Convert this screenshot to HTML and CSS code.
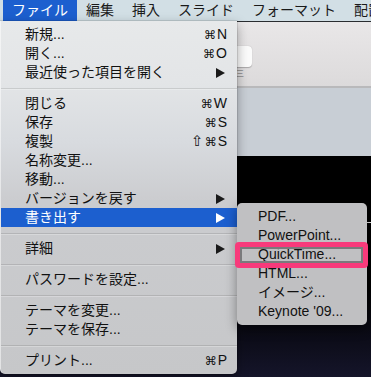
FILE: index.html
```html
<!DOCTYPE html>
<html lang="ja">
<head>
<meta charset="utf-8">
<title>Keynote ファイルメニュー</title>
<link rel="stylesheet" href="styles.css">
</head>
<body>
<div class="screen">
  <div class="menubar">
    <span class="mb-item active">ファイル</span>
    <span class="mb-item">編集</span>
    <span class="mb-item">挿入</span>
    <span class="mb-item">スライド</span>
    <span class="mb-item">フォーマット</span>
    <span class="mb-item">配置</span>
  </div>
  <div class="window">
    <div class="toolbar">
      <div class="tb-btn"></div>
      <span class="tb-label">三</span>
    </div>
    <div class="canvas-top"></div>
    <div class="slide"><span class="slide-line"></span></div>
  </div>

  <div class="menu">
    <div class="item"><span class="label">新規...</span><span class="key"><span class="cmd">⌘</span>N</span></div>
    <div class="item"><span class="label">開く...</span><span class="key"><span class="cmd">⌘</span>O</span></div>
    <div class="item"><span class="label">最近使った項目を開く</span><svg class="arrow" viewBox="0 0 9 10"><polygon points="0,0 9,5 0,10"/></svg></div>
    <div class="sep"></div>
    <div class="item"><span class="label">閉じる</span><span class="key"><span class="cmd">⌘</span>W</span></div>
    <div class="item"><span class="label">保存</span><span class="key"><span class="cmd">⌘</span>S</span></div>
    <div class="item"><span class="label">複製</span><span class="key"><span class="shift">⇧</span><span class="cmd">⌘</span>S</span></div>
    <div class="item"><span class="label">名称変更...</span></div>
    <div class="item"><span class="label">移動...</span></div>
    <div class="item"><span class="label">バージョンを戻す</span><svg class="arrow" viewBox="0 0 9 10"><polygon points="0,0 9,5 0,10"/></svg></div>
    <div class="item selected"><span class="label">書き出す</span><svg class="arrow" viewBox="0 0 9 10"><polygon points="0,0 9,5 0,10"/></svg></div>
    <div class="sep"></div>
    <div class="item"><span class="label">詳細</span><svg class="arrow" viewBox="0 0 9 10"><polygon points="0,0 9,5 0,10"/></svg></div>
    <div class="sep"></div>
    <div class="item"><span class="label">パスワードを設定...</span></div>
    <div class="sep"></div>
    <div class="item"><span class="label">テーマを変更...</span></div>
    <div class="item"><span class="label">テーマを保存...</span></div>
    <div class="sep"></div>
    <div class="item"><span class="label">プリント...</span><span class="key"><span class="cmd">⌘</span>P</span></div>
  </div>

  <div class="submenu">
    <div class="sub-item">PDF...</div>
    <div class="sub-item">PowerPoint...</div>
    <div class="sub-item">QuickTime...</div>
    <div class="sub-item">HTML...</div>
    <div class="sub-item">イメージ...</div>
    <div class="sub-item">Keynote '09...</div>
  </div>
  <div class="callout"></div>
</div>
</body>
</html>
```

FILE: styles.css
```css
* { box-sizing: border-box; }

html, body {
  margin: 0;
  padding: 0;
  background: #000;
}

.screen {
  position: relative;
  width: 371px;
  height: 377px;
  overflow: hidden;
  font-family: "Liberation Sans", "Noto Sans CJK JP", sans-serif;
  font-size: 14px;
  color: #111;
}

/* ---------- menu bar ---------- */
.menubar {
  display: flex;
  height: 22px;
  padding-left: 3px;
  background: #d2dfe5;
  border-bottom: 1px solid #2a2d30;
  white-space: nowrap;
}

.mb-item {
  display: block;
  flex: none;
  height: 21px;
  line-height: 21px;
  padding: 0 9px;
  color: #1a1a1a;
}

.mb-item.active {
  background: #1c5fcf;
  color: #fff;
}

/* ---------- app window behind ---------- */
.window {
  display: flex;
  flex-direction: column;
  height: 355px;
}

.toolbar {
  position: relative;
  height: 66px;
  flex: none;
  background: linear-gradient(#e9e7e8, #dcdadb);
  border-bottom: 2px solid #b9b9bb;
  padding: 24px 0 0 198px;
}

.tb-btn {
  width: 54px;
  height: 21px;
  background: #fbfbfb;
  border-radius: 4px;
  box-shadow: 0 0.5px 1px rgba(0,0,0,0.25);
}

.tb-label {
  display: block;
  margin: 3px 0 0 38px;
  font-size: 8px;
  line-height: 8px;
  color: #666;
}

.canvas-top {
  height: 68px;
  flex: none;
  background: #c8ced5;
}

.slide {
  position: relative;
  flex: 1;
  background: linear-gradient(#000 0, #000 130px, #15152a 100%);
}

.slide-line {
  position: absolute;
  left: 360px;
  top: 66px;
  width: 11px;
  height: 1px;
  background: #e8e8e8;
}

/* ---------- File menu ---------- */
.menu {
  position: absolute;
  left: 0;
  top: 21px;
  width: 237px;
  padding: 4px 0 4px;
  border-radius: 0 0 5px 5px;
  border-left: 1px solid rgba(255,255,255,0.5);
  background: linear-gradient(#e7e9ea 0, #e3e5e7 60px, #d8dbdf 120px, #cbcccf 180px, #c6c7c9 100%);
  box-shadow: 0 4px 12px rgba(0,0,0,0.35), 0 0 0 0.5px rgba(0,0,0,0.2);
}

.item {
  display: flex;
  align-items: center;
  height: 19px;
  line-height: 19px;
  padding: 0 10px 0 24px;
  white-space: nowrap;
}

.item .label {
  flex: 1;
}

.item .key {
  font-family: "Liberation Sans", "DejaVu Sans", sans-serif;
  font-size: 14px;
}

.key .cmd {
  font-family: "DejaVu Sans", sans-serif;
  font-size: 12px;
  margin-right: 1px;
}

.key .shift {
  font-family: "DejaVu Sans", sans-serif;
  font-size: 15px;
  margin-right: 1px;
}

.arrow {
  width: 9px;
  height: 10px;
  margin-right: 2px;
  fill: #1a1a1a;
}

.item.selected {
  background: #1c5fcf;
  color: #fff;
}

.item.selected .arrow {
  fill: #fff;
}

.sep {
  height: 12px;
  display: flex;
  align-items: center;
}

.sep::before {
  content: "";
  display: block;
  width: 100%;
  height: 1px;
  background: rgba(0,0,0,0.11);
  box-shadow: 0 1px 0 rgba(255,255,255,0.25);
}

/* ---------- Export submenu ---------- */
.submenu {
  position: absolute;
  left: 237px;
  top: 203px;
  width: 130px;
  padding: 4px 0;
  border-radius: 5px;
  background: #c0c0c2;
  box-shadow: 0 4px 12px rgba(0,0,0,0.4);
}

.sub-item {
  height: 19px;
  line-height: 19px;
  padding-left: 21px;
  white-space: nowrap;
}

.callout {
  position: absolute;
  left: 235px;
  top: 242px;
  width: 133px;
  height: 26px;
  border: 5px solid #f83a7b;
  border-radius: 4px;
  box-shadow: inset 0 0 0 2px #7a7a7c;
}
```
